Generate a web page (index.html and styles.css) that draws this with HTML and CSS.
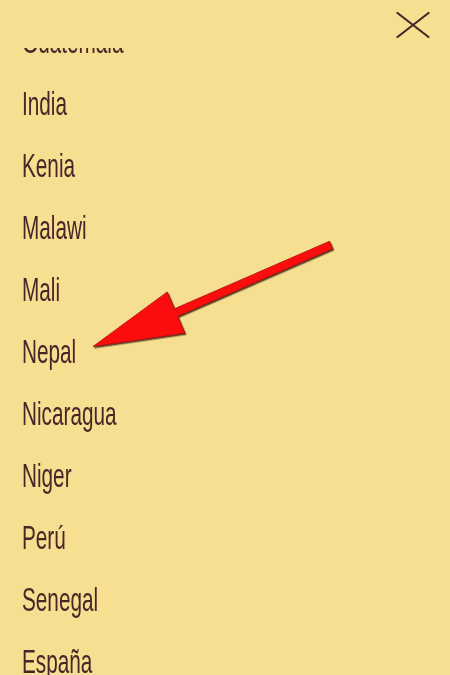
FILE: index.html
```html
<!DOCTYPE html>
<html lang="es">
<head>
    <meta charset="UTF-8">
    <meta name="viewport" content="width=device-width, initial-scale=1.0">
    <title>Países</title>
    <link rel="stylesheet" href="styles.css">
</head>
<body>
    <div class="panel">
        <!-- Close bar -->
        <div class="panel-head">
            <a href="#" class="close-btn" aria-label="Cerrar">
                <svg width="34" height="27" viewBox="0 0 34 27">
                    <path d="M1.5 2 L32.5 26 M32.5 2 L1.5 26" stroke="#4a2528" stroke-width="2.2" stroke-linecap="round" fill="none"/>
                </svg>
            </a>
        </div>

        <!-- Country list -->
        <div class="panel-body">
            <ul class="country-list">
                <li><a href="#"><span>Guatemala</span></a></li>
                <li><a href="#"><span>India</span></a></li>
                <li><a href="#"><span>Kenia</span></a></li>
                <li><a href="#"><span>Malawi</span></a></li>
                <li><a href="#"><span>Mali</span></a></li>
                <li><a href="#"><span>Nepal</span></a></li>
                <li><a href="#"><span>Nicaragua</span></a></li>
                <li><a href="#"><span>Niger</span></a></li>
                <li><a href="#"><span>Perú</span></a></li>
                <li><a href="#"><span>Senegal</span></a></li>
                <li><a href="#"><span>España</span></a></li>
            </ul>
        </div>
    </div>

    <!-- Pointer arrow drawn over the list -->
    <svg class="pointer" width="450" height="675" viewBox="0 0 450 675">
        <defs>
            <filter id="bevel" x="-10%" y="-10%" width="120%" height="130%">
                <feDropShadow dx="1.2" dy="1.4" stdDeviation="0.6" flood-color="#3a1a10" flood-opacity="0.85"/>
            </filter>
        </defs>
        <polygon points="329.4,241.3 332.6,248.7 177.6,316.2 184.8,333.1 93,346.5 167.2,291.9 174.4,308.8"
                 fill="#fb0d0d" stroke="#b01010" stroke-width="0.8" stroke-linejoin="round" filter="url(#bevel)"/>
    </svg>
</body>
</html>
```

FILE: styles.css
```css
* {
    margin: 0;
    padding: 0;
    box-sizing: border-box;
}

body {
    font-family: "Liberation Sans", Arial, sans-serif;
    background-color: #f6df91;
    color: #4a2528;
    width: 450px;
    height: 675px;
    overflow: hidden;
    position: relative;
}

.panel {
    display: flex;
    flex-direction: column;
    height: 100vh;
}

.panel-head {
    flex: none;
    height: 48px;
    display: flex;
    justify-content: flex-end;
    align-items: flex-start;
    padding: 11px 20px 0 0;
    background-color: #f6df91;
    position: relative;
    z-index: 1;
}

.close-btn {
    display: block;
    line-height: 0;
}

.panel-body {
    flex: 1;
    min-height: 0;
    overflow: hidden;
}

.country-list {
    list-style: none;
    margin-top: -38px;
}

.country-list a {
    display: block;
    height: 62px;
    line-height: 62px;
    padding-left: 22px;
    font-size: 34px;
    color: #4a2528;
    text-decoration: none;
}

/* narrow, tall lettering */
.country-list span {
    display: inline-block;
    transform: scaleX(0.61);
    transform-origin: left center;
}

.pointer {
    position: absolute;
    top: 0;
    left: 0;
    pointer-events: none;
}
```
